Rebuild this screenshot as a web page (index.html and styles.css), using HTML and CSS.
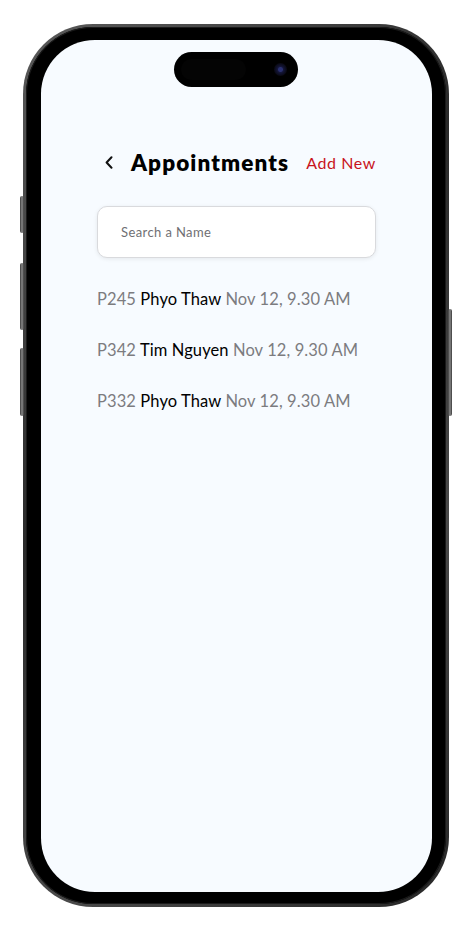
FILE: index.html
```html
<!DOCTYPE html>
<html lang="en">
<head>
<meta charset="utf-8">
<title>Appointments</title>
<link rel="stylesheet" href="styles.css">
</head>
<body>
<div class="stage">
  <div class="phone">
    <span class="btn btn-action"></span>
    <span class="btn btn-vol-up"></span>
    <span class="btn btn-vol-down"></span>
    <span class="btn btn-power"></span>
    <div class="bezel">
      <div class="screen">
        <div class="island"><span class="island-pill"></span><span class="camera"></span></div>
        <div class="content">
          <header class="header">
            <span class="back">
              <svg width="8" height="13" viewBox="0 0 8 13"><path d="M6.5 1.2 L1.6 6.5 L6.5 11.8" fill="none" stroke="#111" stroke-width="2" stroke-linecap="round" stroke-linejoin="round"/></svg>
            </span>
            <h1 class="title">Appointments</h1>
            <a class="add">Add New</a>
          </header>
          <div class="search">Search a Name</div>
          <ul class="list">
            <li class="row"><span class="muted">P245</span> <span class="name">Phyo Thaw</span> <span class="muted">Nov 12, 9.30 AM</span></li>
            <li class="row"><span class="muted">P342</span> <span class="name">Tim Nguyen</span> <span class="muted">Nov 12, 9.30 AM</span></li>
            <li class="row"><span class="muted">P332</span> <span class="name">Phyo Thaw</span> <span class="muted">Nov 12, 9.30 AM</span></li>
          </ul>
        </div>
      </div>
    </div>
  </div>
</div>
</body>
</html>
```
FILE: styles.css
```css
* { box-sizing: border-box; }
html, body { margin: 0; padding: 0; background: #ffffff; }
body { font-family: Lato, "Noto Sans", sans-serif; }

.stage {
  display: flex;
  justify-content: flex-start;
  padding: 24px 0 0 23px;
}

.phone {
  position: relative;
  width: 426px;
  height: 883px;
  border-radius: 70px;
  padding: 3px;
  background: linear-gradient(135deg, #5a5a5a, #2a2a2a 40%, #4a4a4a 70%, #262626);
}

.bezel {
  width: 100%;
  height: 100%;
  border-radius: 67px;
  background: #000;
  padding: 13px 14px 12px 15px;
  box-shadow: inset 0 0 0 1px #1a1a1a;
}

.screen {
  position: relative;
  width: 100%;
  height: 100%;
  border-radius: 54px;
  background: #f7fbff;
  overflow: hidden;
}

.island {
  position: absolute;
  top: 12px;
  left: 133px;
  width: 124px;
  height: 35px;
  border-radius: 18px;
  background: #000;
}
.island-pill {
  position: absolute;
  left: 7px;
  top: 7px;
  width: 65px;
  height: 21px;
  border-radius: 11px;
  background: #040404;
}
.camera {
  position: absolute;
  left: 100px;
  top: 11px;
  width: 13px;
  height: 13px;
  border-radius: 50%;
  background: radial-gradient(circle, #2a3070 0 2px, #14163a 3px, #0a0a16 6px);
}

.btn {
  position: absolute;
  width: 4px;
  border-radius: 2px;
  background: linear-gradient(90deg, #3a3a3a, #8a8a8a 50%, #3a3a3a);
}
.btn-action { left: -3px; top: 172px; height: 37px; }
.btn-vol-up { left: -3px; top: 239px; height: 67px; }
.btn-vol-down { left: -3px; top: 324px; height: 68px; }
.btn-power { right: -3px; top: 285px; height: 107px; }

.content {
  padding: 110px 56px 0 56px;
}

.header {
  display: flex;
  align-items: center;
  height: 24px;
}
.back {
  display: flex;
  margin-left: 8px;
  width: 26px;
}
.title {
  margin: 0;
  font-size: 22.5px;
  font-weight: 800;
  color: #000;
  letter-spacing: 1.1px;
}
.add {
  margin-left: auto;
  font-size: 16px;
  color: #c8141c;
  letter-spacing: 0.6px;
}

.search {
  margin-top: 32px;
  height: 52px;
  border: 1px solid #d9dadd;
  border-radius: 10px;
  background: #fff;
  box-shadow: 0 1px 4px rgba(0, 0, 0, 0.08);
  padding-left: 23px;
  display: flex;
  align-items: center;
  font-size: 13px;
  letter-spacing: 0.4px;
  color: #6f6f73;
}

.list {
  list-style: none;
  margin: 0;
  padding: 30px 0 0 0;
}
.row {
  height: 51px;
  font-size: 16.5px;
  line-height: 22px;
  letter-spacing: 0.1px;
}
.muted { color: #7c7c7f; }
.name { color: #000; }
```
